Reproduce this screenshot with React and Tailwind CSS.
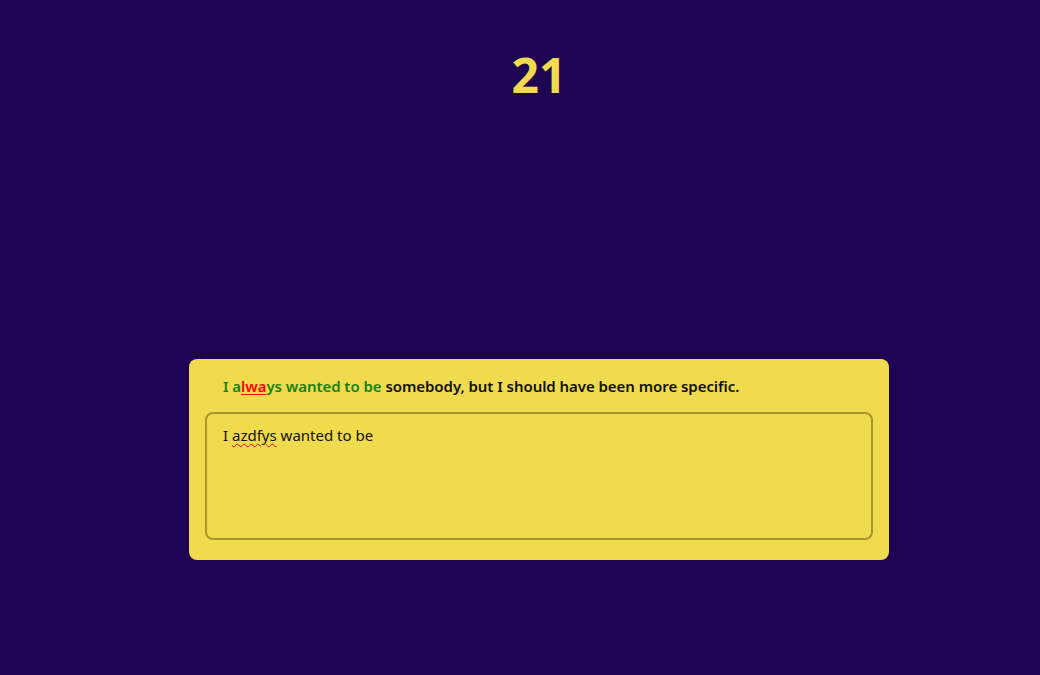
// Typing test card: counter on top, target sentence + input box below
export default function App() {
  return (
    <div
      className="min-h-screen w-full bg-[#1e0453] text-[#111]"
      style={{ fontFamily: '"Noto Sans", "Open Sans", sans-serif' }}
    >
      <div className="ml-[189px] w-[700px] flex flex-col items-center">
        {/* countdown */}
        <h1 className="mt-[45px] text-[48px] font-bold leading-[60px] text-[#f0da4e]">21</h1>

        {/* card */}
        <div className="mt-[254px] w-full rounded-lg bg-[#f0da4e] px-4 pt-[14px] pb-5">
          <p className="pl-[18px] text-[15px] font-semibold leading-[26px] tracking-[-0.05px]">
            <span className="text-[#168216]">I a</span>
            <span className="text-[#ff0000] underline decoration-[#ff0000] decoration-1 underline-offset-2">lwa</span>
            <span className="text-[#168216]">ys wanted to be</span>{" "}
            somebody, but I should have been more specific.
          </p>
          <div className="mt-[13px] h-[128px] rounded-lg border-2 border-[#a8962a] px-4 py-[10px] text-[15px] leading-[22px]">
            I{" "}
            <span className="underline decoration-wavy decoration-[#e01010] decoration-1 underline-offset-2">azdfys</span>{" "}
            wanted to be
          </div>
        </div>
      </div>
    </div>
  );
}
